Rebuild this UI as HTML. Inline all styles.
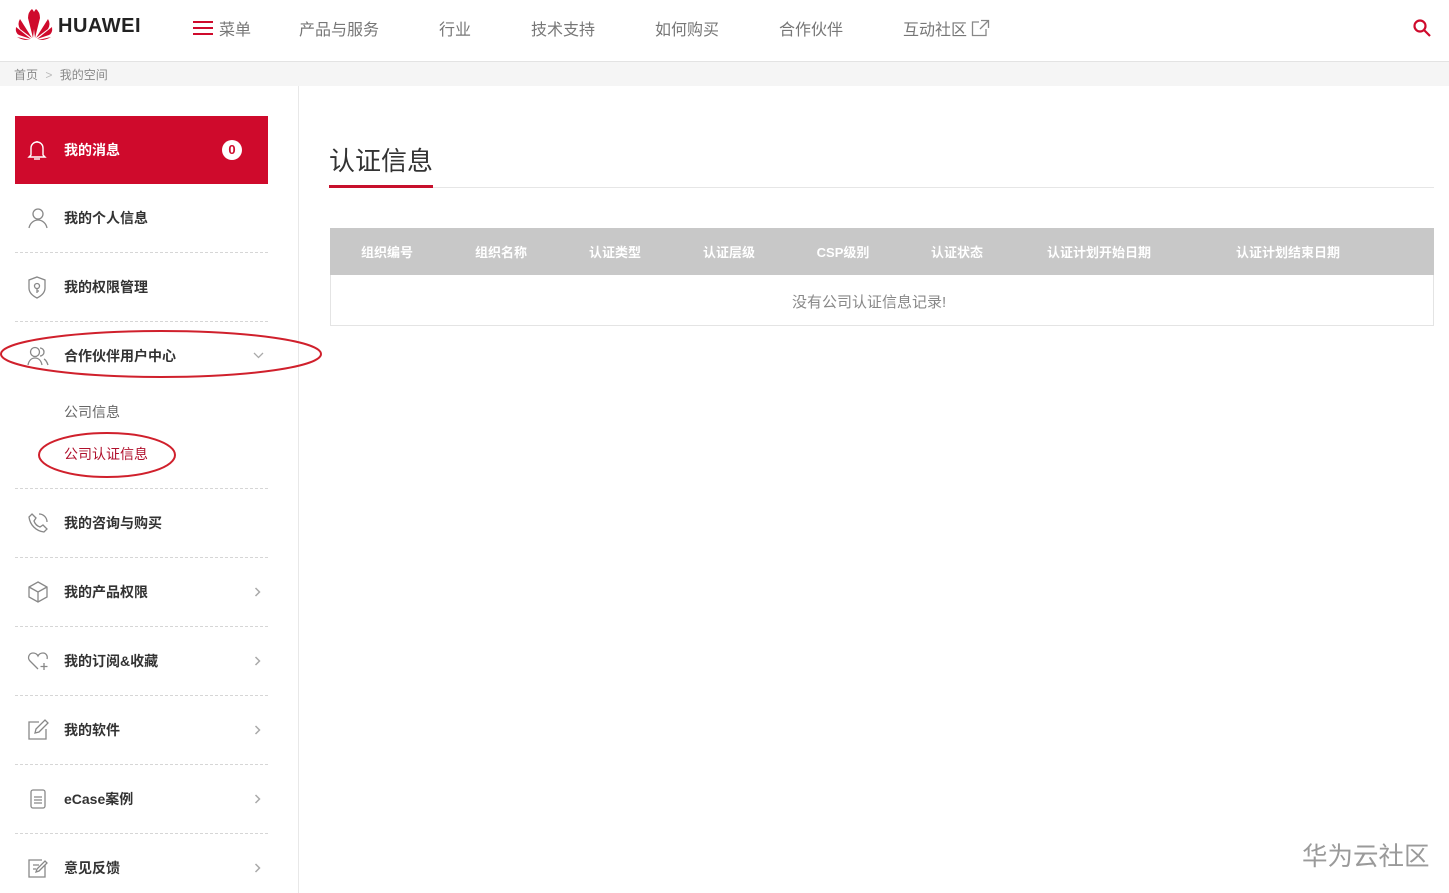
<!DOCTYPE html>
<html><head><meta charset="utf-8"><style>
*{margin:0;padding:0;box-sizing:border-box}
body{width:1449px;height:893px;overflow:hidden;background:#fff;font-family:"Liberation Sans","Noto Sans CJK SC",sans-serif;position:relative;color:#333}
.a{position:absolute;white-space:nowrap}
.nav{font-size:16px;color:#777;top:16px}
.it{left:64px;font-size:14px;font-weight:bold;color:#333;line-height:20px}
.sep{position:absolute;left:15px;width:253px;border-top:1px dashed #d6d6d6;height:0}
.ic{position:absolute;left:27px}
.chev{position:absolute;left:254px}
.th{position:absolute;top:242px;font-size:13px;font-weight:bold;color:#fff;transform:translateX(-50%);white-space:nowrap}
</style></head><body>
<svg class="a" style="left:15px;top:9px" width="38" height="31" viewBox="0 0 38 31">
<g fill="#cf0a2c">
<path d="M18 29 L13 9 Q13 3 17 0 Q21 4 20 11Z"/>
<path d="M20 29 L25 9 Q25 3 21 0 Q17 4 18 11Z"/>
<path d="M17 29 L5 10 Q2 15 5 20Z"/>
<path d="M21 29 L33 10 Q36 15 33 20Z"/>
<path d="M16 30 L1 18 Q0 24 4 26Z"/>
<path d="M22 30 L37 18 Q38 24 34 26Z"/>
<path d="M15 31 L2 28 Q7 31 12 31Z"/>
<path d="M23 31 L36 28 Q31 31 26 31Z"/>
</g></svg>
<div class="a" style="left:58px;top:15px;font-size:20px;font-weight:bold;color:#222;letter-spacing:0.5px">HUAWEI</div>
<div class="a" style="left:193px;top:21px;width:20px;height:14px;border-top:2px solid #cf0a2c;border-bottom:2px solid #cf0a2c"><div style="margin-top:4px;border-top:2px solid #cf0a2c"></div></div>
<div class="a nav" style="left:219px">菜单</div>
<div class="a nav" style="left:299px">产品与服务</div>
<div class="a nav" style="left:439px">行业</div>
<div class="a nav" style="left:531px">技术支持</div>
<div class="a nav" style="left:655px">如何购买</div>
<div class="a nav" style="left:779px">合作伙伴</div>
<div class="a nav" style="left:903px">互动社区</div>
<svg class="a" style="left:971px;top:19px" width="19" height="18" viewBox="0 0 19 18" fill="none" stroke="#888" stroke-width="1.3"><path d="M8 3H1.5V16.5H15V10"/><path d="M10 1.5H17.5V9M17.5 1.5L9 10"/></svg>
<svg class="a" style="left:1412px;top:18px" width="20" height="20" viewBox="0 0 20 20" fill="none" stroke="#cf0a2c" stroke-width="2.2"><circle cx="8" cy="8" r="5.5"/><path d="M12 12L18 18"/></svg>
<div class="a" style="left:0;top:61px;width:1449px;height:25px;background:#f5f5f5;border-top:1px solid #e3e3e3"></div>
<div class="a" style="left:14px;top:66px;font-size:12px;color:#888">首页 <span style="color:#bbb;margin:0 4px">&gt;</span> 我的空间</div>
<div class="a" style="left:298px;top:86px;width:1px;height:807px;background:#e8e8e8"></div>
<div class="a" style="left:15px;top:116px;width:253px;height:68px;background:#cf0a2c"></div>
<svg class="ic" style="top:139px" width="20" height="22" viewBox="0 0 20 22" fill="none" stroke="#fff" stroke-width="1.4"><path d="M10 2V3.5M4 16V9a6 6 0 0 1 12 0v7l2 2H2z"/><path d="M7 20h6"/></svg>
<div class="a it" style="top:140px;color:#fff">我的消息</div>
<div class="a" style="left:222px;top:140px;width:20px;height:20px;border-radius:50%;background:#fff;color:#cf0a2c;font-size:13px;font-weight:bold;text-align:center;line-height:20px">0</div>

<svg class="ic" style="top:207px" width="22" height="22" viewBox="0 0 22 22" fill="none" stroke="#888" stroke-width="1.3"><circle cx="11" cy="7" r="5"/><path d="M2 21c1-5 5-8 9-8s8 3 9 8"/></svg>
<div class="a it" style="top:208px">我的个人信息</div>
<div class="sep" style="top:252px"></div>

<svg class="ic" style="top:276px" width="20" height="23" viewBox="0 0 20 23" fill="none" stroke="#888" stroke-width="1.3"><path d="M10 1L18 4V12C18 17 14 20 10 22C6 20 2 17 2 12V4Z"/><circle cx="10" cy="10" r="2.5"/><path d="M10 12.5V17M10 15h2"/></svg>
<div class="a it" style="top:277px">我的权限管理</div>
<div class="sep" style="top:321px"></div>

<svg class="ic" style="top:345px" width="22" height="22" viewBox="0 0 22 22" fill="none" stroke="#888" stroke-width="1.3"><circle cx="8" cy="7" r="4.5"/><path d="M1 20c1-5 4-7 7-7s6 2 7 7"/><path d="M13 3a4 4 0 0 1 0 8M17 14c2 1 3 3 4 6"/></svg>
<div class="a it" style="top:346px">合作伙伴用户中心</div>
<svg class="a" style="left:253px;top:352px" width="11" height="7" viewBox="0 0 11 7" fill="none" stroke="#aaa" stroke-width="1.3"><path d="M1 1l4.5 4.5L10 1"/></svg>
<svg class="a" style="left:0;top:328px" width="325" height="52"><ellipse cx="161" cy="26" rx="160" ry="23" fill="none" stroke="#d0202c" stroke-width="2"/></svg>
<div class="a" style="left:64px;top:402px;font-size:14px;color:#666">公司信息</div>
<div class="a" style="left:64px;top:444px;font-size:14px;color:#b0102c">公司认证信息</div>
<svg class="a" style="left:37px;top:430px" width="140" height="52"><ellipse cx="70" cy="25" rx="68" ry="22" fill="none" stroke="#d0202c" stroke-width="2"/></svg>
<div class="sep" style="top:488px"></div>

<svg class="ic" style="top:512px" width="22" height="22" viewBox="0 0 22 22" fill="none" stroke="#888" stroke-width="1.3"><path d="M5 2L9 6 7 9c1 3 3 5 6 6l3-2 4 4-3 3C9 19 3 13 2 5z"/><path d="M12 2a8 8 0 0 1 8 8"/></svg>
<div class="a it" style="top:513px">我的咨询与购买</div>
<div class="sep" style="top:557px"></div>

<svg class="ic" style="top:581px" width="22" height="22" viewBox="0 0 22 22" fill="none" stroke="#888" stroke-width="1.3"><path d="M11 1L20 6V16L11 21L2 16V6Z"/><path d="M2 6L11 11L20 6M11 11V21"/></svg>
<div class="a it" style="top:582px">我的产品权限</div>
<svg class="chev" style="top:587px" width="7" height="10" viewBox="0 0 7 10" fill="none" stroke="#aaa" stroke-width="1.5"><path d="M1.5 1l4 4-4 4"/></svg>
<div class="sep" style="top:626px"></div>

<svg class="ic" style="top:650px" width="22" height="22" viewBox="0 0 22 22" fill="none" stroke="#888" stroke-width="1.3"><path d="M11 19L3 11C0 8 2 3 6 3c2 0 4 1 5 3 1-2 3-3 5-3 3 0 5 3 4 6"/><path d="M17 13v7M13.5 16.5h7"/></svg>
<div class="a it" style="top:651px">我的订阅&amp;收藏</div>
<svg class="chev" style="top:656px" width="7" height="10" viewBox="0 0 7 10" fill="none" stroke="#aaa" stroke-width="1.5"><path d="M1.5 1l4 4-4 4"/></svg>
<div class="sep" style="top:695px"></div>

<svg class="ic" style="top:719px" width="22" height="22" viewBox="0 0 22 22" fill="none" stroke="#888" stroke-width="1.3"><path d="M12 3H2V20H19V10"/><path d="M8 14l1-4 9-9 3 3-9 9z"/></svg>
<div class="a it" style="top:720px">我的软件</div>
<svg class="chev" style="top:725px" width="7" height="10" viewBox="0 0 7 10" fill="none" stroke="#aaa" stroke-width="1.5"><path d="M1.5 1l4 4-4 4"/></svg>
<div class="sep" style="top:764px"></div>

<svg class="ic" style="top:788px" width="22" height="22" viewBox="0 0 22 22" fill="none" stroke="#888" stroke-width="1.3"><rect x="4" y="2" width="14" height="18" rx="2"/><path d="M7 9h8M7 12h8M7 15h8"/></svg>
<div class="a it" style="top:789px">eCase案例</div>
<svg class="chev" style="top:794px" width="7" height="10" viewBox="0 0 7 10" fill="none" stroke="#aaa" stroke-width="1.5"><path d="M1.5 1l4 4-4 4"/></svg>
<div class="sep" style="top:833px"></div>

<svg class="ic" style="top:857px" width="22" height="22" viewBox="0 0 22 22" fill="none" stroke="#888" stroke-width="1.3"><path d="M18 8V20H2V3H15"/><path d="M6 8h6M6 12h3M9 15l3-1 8-8-2-2-8 8z"/></svg>
<div class="a it" style="top:858px">意见反馈</div>
<svg class="chev" style="top:863px" width="7" height="10" viewBox="0 0 7 10" fill="none" stroke="#aaa" stroke-width="1.5"><path d="M1.5 1l4 4-4 4"/></svg>

<div class="a" style="left:329px;top:141px;font-size:26px;color:#333">认证信息</div>
<div class="a" style="left:329px;top:187px;width:1105px;height:1px;background:#e6e6e6"></div>
<div class="a" style="left:329px;top:185px;width:104px;height:3px;background:#c7102c"></div>
<div class="a" style="left:330px;top:228px;width:1104px;height:98px;border:1px solid #e4e4e4"></div>
<div class="a" style="left:330px;top:228px;width:1104px;height:47px;background:#c8c8c8"></div>
<div class="th" style="left:387px">组织编号</div>
<div class="th" style="left:501px">组织名称</div>
<div class="th" style="left:615px">认证类型</div>
<div class="th" style="left:729px">认证层级</div>
<div class="th" style="left:843px">CSP级别</div>
<div class="th" style="left:957px">认证状态</div>
<div class="th" style="left:1099px">认证计划开始日期</div>
<div class="th" style="left:1288px">认证计划结束日期</div>
<div class="a" style="left:792px;top:291px;font-size:15px;color:#888">没有公司认证信息记录!</div>
<div class="a" style="left:1302px;top:836px;font-size:25.5px;color:#9a9a9a">华为云社区</div>
</body></html>
